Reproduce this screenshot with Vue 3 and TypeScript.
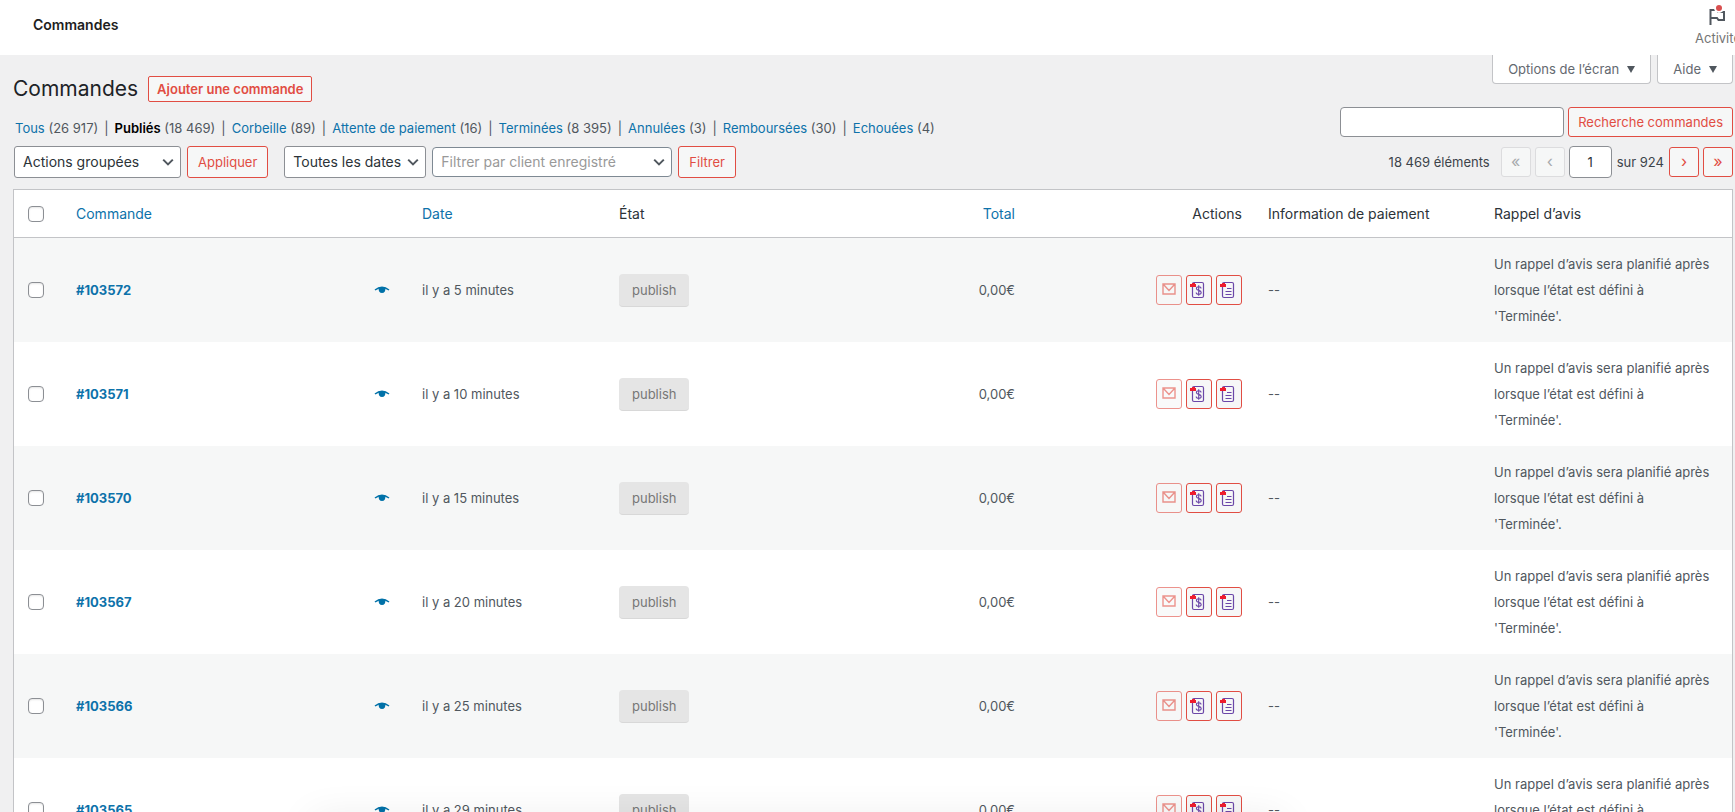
<script setup lang="ts">
import { ref } from 'vue'

interface StatusView {
  label: string
  count: string
  current?: boolean
}

interface Order {
  id: number
  date: string
}

const views: StatusView[] = [
  { label: 'Tous', count: '26 917' },
  { label: 'Publiés', count: '18 469', current: true },
  { label: 'Corbeille', count: '89' },
  { label: 'Attente de paiement', count: '16' },
  { label: 'Terminées', count: '8 395' },
  { label: 'Annulées', count: '3' },
  { label: 'Remboursées', count: '30' },
  { label: 'Echouées', count: '4' },
]

const orders: Order[] = [
  { id: 103572, date: 'il y a 5 minutes' },
  { id: 103571, date: 'il y a 10 minutes' },
  { id: 103570, date: 'il y a 15 minutes' },
  { id: 103567, date: 'il y a 20 minutes' },
  { id: 103566, date: 'il y a 25 minutes' },
  { id: 103565, date: 'il y a 29 minutes' },
]

const search = ref('')
const page = ref('1')
const selected = ref<number[]>([])

function toggleAll(event: Event) {
  const checked = (event.target as HTMLInputElement).checked
  selected.value = checked ? orders.map((o) => o.id) : []
}
</script>

<template>
  <div class="admin">
    <header class="topbar">
      <span class="topbar-title">Commandes</span>
      <button type="button" class="activity">
        <svg viewBox="0 0 24 24" width="24" height="24" aria-hidden="true">
          <path d="M4.500 21V6H11l1 2h6v8h-5.500l-1.500-2H4.500" fill="none" stroke="#50575e" stroke-width="2" />
          <circle cx="13" cy="4" r="5" fill="#fff" />
          <circle cx="13" cy="4" r="3" fill="#d94f4f" />
        </svg>
        <span>Activité</span>
      </button>
    </header>

    <main class="content">
      <div class="head-row">
        <div class="heading">
          <h1>Commandes</h1>
          <a href="#" class="add">Ajouter une commande</a>
        </div>
        <div class="screen-meta">
          <button type="button" class="tab">Options de l’écran <i class="caret"></i></button>
          <button type="button" class="tab">Aide <i class="caret"></i></button>
        </div>
      </div>

      <div class="views-row">
        <ul class="views">
          <li v-for="v in views" :key="v.label">
            <a href="#" :class="{ current: v.current }">{{ v.label }}</a> ({{ v.count }})
          </li>
        </ul>
        <form class="search" @submit.prevent>
          <input v-model="search" type="search" class="field" aria-label="Recherche commandes" />
          <button type="submit" class="btn">Recherche commandes</button>
        </form>
      </div>

      <div class="filters">
        <span class="pick bulk">
          <select aria-label="Actions groupées"><option>Actions groupées</option></select>
          <svg viewBox="0 0 20 20" width="16" height="16" aria-hidden="true"><path d="M4 7l6 6 6-6" /></svg>
        </span>
        <button type="button" class="btn tall apply">Appliquer</button>
        <span class="pick dates">
          <select aria-label="Filtrer par date"><option>Toutes les dates</option></select>
          <svg viewBox="0 0 20 20" width="16" height="16" aria-hidden="true"><path d="M4 7l6 6 6-6" /></svg>
        </span>
        <span class="pick client">
          <select aria-label="Filtrer par client enregistré"><option>Filtrer par client enregistré</option></select>
          <svg viewBox="0 0 20 20" width="16" height="16" aria-hidden="true"><path d="M4 7l6 6 6-6" /></svg>
        </span>
        <button type="button" class="btn tall">Filtrer</button>

        <nav class="pager" aria-label="Pagination">
          <span class="count">18 469 éléments</span>
          <button type="button" class="btn step" disabled aria-label="Première page">«</button>
          <button type="button" class="btn step" disabled aria-label="Page précédente">‹</button>
          <input v-model="page" type="text" class="field page" aria-label="Page actuelle" />
          <span class="total-pages">sur 924</span>
          <button type="button" class="btn step" aria-label="Page suivante">›</button>
          <button type="button" class="btn step" aria-label="Dernière page">»</button>
        </nav>
      </div>

      <table class="orders">
        <colgroup>
          <col class="c-check" />
          <col />
          <col class="c-date" />
          <col class="c-state" />
          <col class="c-total" />
          <col class="c-actions" />
          <col class="c-info" />
          <col class="c-review" />
        </colgroup>
        <thead>
          <tr>
            <th class="check"><input type="checkbox" aria-label="Tout sélectionner" @change="toggleAll" /></th>
            <th><a href="#">Commande</a></th>
            <th><a href="#">Date</a></th>
            <th>État</th>
            <th class="right"><a href="#">Total</a></th>
            <th class="right">Actions</th>
            <th>Information de paiement</th>
            <th>Rappel d’avis</th>
          </tr>
        </thead>
        <tbody>
          <tr v-for="o in orders" :key="o.id">
            <td class="check">
              <input v-model="selected" type="checkbox" :value="o.id" :aria-label="`Sélectionner la commande ${o.id}`" />
            </td>
            <td>
              <div class="order">
                <a href="#">#{{ o.id }}</a>
                <button type="button" class="preview" aria-label="Aperçu">
                  <svg viewBox="0 0 16 8" width="16" height="8" aria-hidden="true">
                    <path d="M1 4Q8-1.500 15 4" fill="none" stroke="#0071a8" stroke-width="1.500" />
                    <path d="M4.500 1.800Q8 .3 11.500 1.800Q11.600 7 8 7T4.500 1.800z" fill="#0071a8" />
                  </svg>
                </button>
              </div>
            </td>
            <td>{{ o.date }}</td>
            <td><span class="status">publish</span></td>
            <td class="right">0,00€</td>
            <td>
              <div class="actions">
                <button type="button" class="act faded" aria-label="Envoyer par e-mail">
                  <svg viewBox="0 0 18 18" width="18" height="18" aria-hidden="true">
                    <path d="M3 3h12v10H3zM3.500 3.500L9 9.500l5.500-6" fill="none" stroke="#e14d43" stroke-width="1.400" />
                  </svg>
                </button>
                <button type="button" class="act" aria-label="Facture PDF">
                  <svg viewBox="0 0 18 18" width="18" height="18" aria-hidden="true">
                    <rect x="2.500" y="1.500" width="11" height="15" rx="1.500" fill="none" stroke="#6b47a8" stroke-width="1.200" />
                    <path d="M11 7.500c0-1.300-1-1.800-2.300-1.800s-2.300.6-2.300 1.800c0 2.500 4.800 1.300 4.800 3.900 0 1.300-1.100 1.900-2.500 1.900s-2.500-.6-2.500-1.900M8.700 4.200v10.600" fill="none" stroke="#6b47a8" stroke-width="1.100" />
                    <path d="M0 3h2V2h3v1h1v3H0z" fill="#ee1c2e" />
                  </svg>
                </button>
                <button type="button" class="act" aria-label="Bon de livraison PDF">
                  <svg viewBox="0 0 18 18" width="18" height="18" aria-hidden="true">
                    <rect x="2.500" y="1.500" width="11" height="15" rx="1.500" fill="none" stroke="#6b47a8" stroke-width="1.200" />
                    <path d="M7 7.500h4.500M5.500 10.500h6M5.500 13.500h6" fill="none" stroke="#6b47a8" stroke-width="1.200" />
                    <path d="M0 3h2V2h3v1h1v3H0z" fill="#ee1c2e" />
                  </svg>
                </button>
              </div>
            </td>
            <td>--</td>
            <td class="review">Un rappel d’avis sera planifié après lorsque l’état est défini à 'Terminée'.</td>
          </tr>
        </tbody>
      </table>
    </main>
    <div class="dock-shadow"></div>
  </div>
</template>

<style>
html,
body {
  height: 100%;
  overflow: hidden;
}
body {
  margin: 0;
  background: #f0f0f1;
}
</style>

<style scoped>
* {
  box-sizing: border-box;
}
.admin {
  height: 100vh;
  overflow: hidden;
  font: 13px/20px Inter, 'Liberation Sans', sans-serif;
  color: #3c434a;
}
button,
input,
select {
  margin: 0;
  font: inherit;
}
a {
  color: #0d72aa;
  text-decoration: none;
}
.topbar {
  display: flex;
  align-items: center;
  justify-content: space-between;
  height: 55px;
  padding-left: 33px;
  background: #fff;
  overflow: hidden;
}
.topbar-title {
  padding-bottom: 5px;
  font-size: 14px;
  font-weight: 600;
  color: #1e1e1e;
}
.activity {
  display: flex;
  flex-direction: column;
  align-items: center;
  width: 60px;
  height: 55px;
  margin-right: -13px;
  padding: 4px 0 0;
  border: 0;
  background: none;
  color: #757575;
}
.content {
  padding: 0 2px 0 13px;
}
.head-row,
.views-row {
  display: flex;
  justify-content: space-between;
}
.head-row {
  height: 52px;
}
.heading {
  display: flex;
  align-items: center;
  gap: 10px;
  padding-top: 16px;
}
h1 {
  margin: 0;
  font-size: 21px;
  line-height: 36px;
  font-weight: 400;
  color: #1d2327;
}
.add {
  padding: 0 8px;
  border: 1px solid #e14d43;
  border-radius: 2px;
  background: #f6f7f7;
  color: #e14d43;
  font-weight: 600;
  line-height: 24px;
}
.screen-meta {
  display: flex;
  gap: 6px;
}
.tab {
  display: flex;
  align-items: center;
  gap: 8px;
  height: 29px;
  padding: 0 15px;
  border: 1px solid #c3c4c7;
  border-top: 0;
  border-radius: 0 0 4px 4px;
  background: #fff;
  color: #646970;
}
.caret {
  border: 4px solid transparent;
  border-top: 7px solid #50575e;
  border-bottom: 0;
}
.views-row {
  align-items: flex-start;
  height: 30px;
}
.views {
  display: flex;
  margin: 0;
  padding: 11px 0 0 2px;
  list-style: none;
  color: #50575e;
}
.views li + li::before {
  content: '|';
  margin: 0 6px;
}
.views .current {
  color: #000;
  font-weight: 600;
}
.search {
  display: flex;
  gap: 4px;
}
.field {
  width: 224px;
  height: 30px;
  padding: 0 8px;
  border: 1px solid #8c8f94;
  border-radius: 4px;
  background: #fff;
  color: #2c3338;
}
.btn {
  height: 30px;
  padding: 0 9px;
  border: 1px solid #e14d43;
  border-radius: 3px;
  background: #f6f7f7;
  color: #e14d43;
  white-space: nowrap;
}
.btn.tall {
  height: 32px;
  padding: 0 10px;
}
.filters {
  display: flex;
  align-items: center;
  gap: 6px;
  margin: 9px 0 11px 1px;
}
.apply {
  margin-right: 10px;
}
.pick {
  display: grid;
  align-items: center;
}
.pick > * {
  grid-area: 1 / 1;
}
.pick select {
  width: 100%;
  height: 32px;
  padding: 0 24px 0 8px;
  border: 1px solid #8c8f94;
  border-radius: 3px;
  background: #fff;
  color: #2c3338;
  font-size: 14px;
  appearance: none;
}
.pick svg {
  justify-self: end;
  margin-right: 5px;
  fill: none;
  stroke: #50575e;
  stroke-width: 2.5;
  pointer-events: none;
}
.bulk {
  width: 167px;
}
.dates {
  width: 142px;
}
.client {
  width: 240px;
}
.pick.client select {
  height: 30px;
  border-color: #7e8993;
  border-radius: 4px;
  color: #999;
}
.pager {
  display: flex;
  align-items: center;
  gap: 4px;
  margin-left: auto;
}
.count {
  margin-right: 7px;
}
.btn.step {
  width: 30px;
  padding: 0 0 3px;
  font-size: 16px;
}
.btn.step:disabled {
  border-color: #dcdcde;
  color: #a7aaad;
}
.field.page {
  width: 43px;
  height: 32px;
  text-align: center;
}
.total-pages {
  margin: 0 1px;
}
.orders {
  width: 100%;
  border: 1px solid #c3c4c7;
  border-spacing: 0;
  table-layout: fixed;
  background: #fff;
}
.c-check {
  width: 49px;
}
.c-date,
.c-state {
  width: 197px;
}
.c-total {
  width: 225px;
}
.c-actions {
  width: 227px;
}
.c-info {
  width: 226px;
}
.c-review {
  width: 251px;
}
th {
  height: 48px;
  padding: 0 13px;
  border-bottom: 1px solid #c3c4c7;
  font-size: 14px;
  font-weight: 400;
  color: #2c3338;
  text-align: left;
}
td {
  padding: 13px;
  line-height: 26px;
  color: #50575e;
}
.review {
  padding-right: 19px;
}
tbody tr:nth-child(odd) {
  background: #f6f7f7;
}
th.right,
td.right {
  text-align: right;
}
.check {
  padding-left: 14px;
}
.check input {
  display: block;
  width: 16px;
  height: 16px;
  border: 1px solid #8c8f94;
  border-radius: 4px;
  background: #fff;
  box-shadow: inset 0 1px 2px rgba(0, 0, 0, 0.1);
  appearance: none;
}
.check input:checked {
  background: #0d72aa;
}
.order {
  display: flex;
  align-items: center;
  justify-content: space-between;
  padding-right: 6px;
}
.order a {
  font-weight: 700;
}
.preview {
  display: flex;
  padding: 0;
  border: 0;
  background: none;
}
.status {
  display: inline-block;
  padding: 0 13px;
  border-bottom: 1px solid #d8d8d8;
  border-radius: 4px;
  background: #e5e5e5;
  color: #777;
  line-height: 32px;
  vertical-align: middle;
}
.actions {
  display: flex;
  justify-content: flex-end;
  gap: 4px;
}
.act {
  display: flex;
  align-items: center;
  justify-content: center;
  width: 26px;
  height: 30px;
  padding: 0;
  border: 1px solid #e14d43;
  border-radius: 3px;
  background: #f6f7f7;
}
.faded {
  opacity: 0.6;
}
.dock-shadow {
  position: fixed;
  bottom: -30px;
  left: 18%;
  right: 26%;
  height: 20px;
  box-shadow: 0 0 40px rgba(0, 0, 0, 0.12);
  pointer-events: none;
}
</style>
